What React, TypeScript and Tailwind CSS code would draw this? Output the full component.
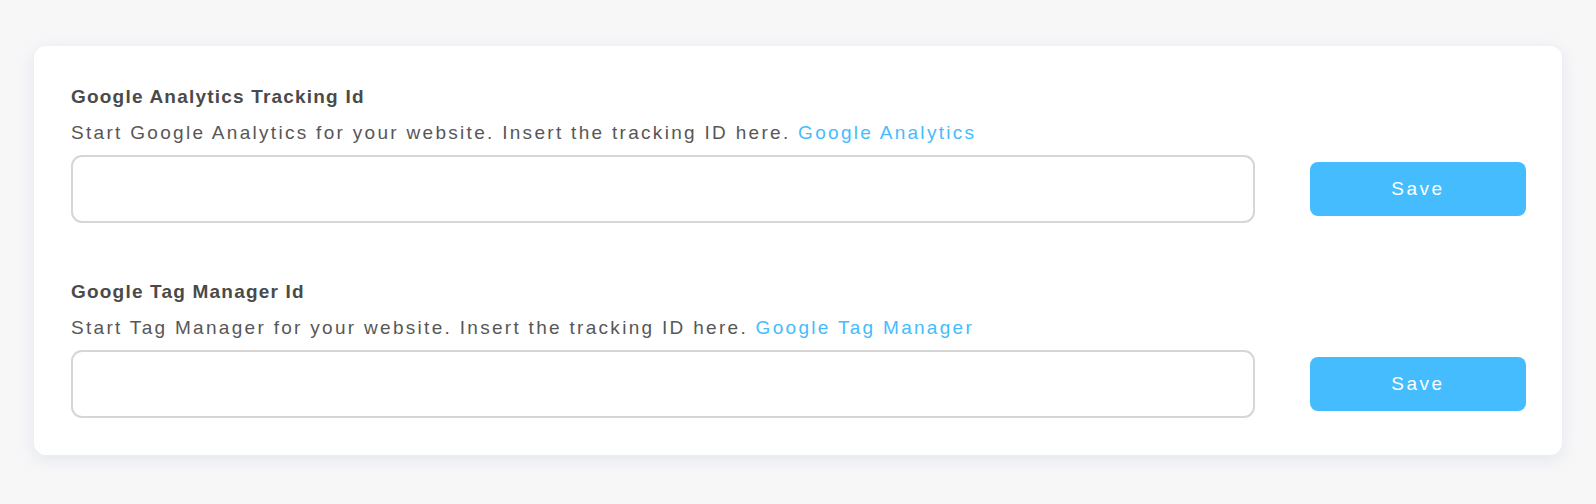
import React from "react";

type Field = {
  title: string;
  text: string;
  link: string;
};

const fields: Field[] = [
  {
    title: "Google Analytics Tracking Id",
    text: "Start Google Analytics for your website. Insert the tracking ID here.",
    link: "Google Analytics",
  },
  {
    title: "Google Tag Manager Id",
    text: "Start Tag Manager for your website. Insert the tracking ID here.",
    link: "Google Tag Manager",
  },
];

function TrackingField({ field, first }: { field: Field; first: boolean }) {
  return (
    <div className={first ? "" : "mt-[57px]"}>
      <h3 className="text-[19px] leading-[24px] font-bold text-[#4a4a4a] tracking-[1.2px]">
        {field.title}
      </h3>
      <p className="mt-3 text-[19px] leading-[24px] text-[#575757] tracking-[2.3px]">
        {field.text}{" "}
        <a href="#" className="text-[#45bcfd]">
          {field.link}
        </a>
      </p>
      <div className="mt-[10px] flex items-center gap-[55px]">
        <input
          type="text"
          className="h-[68px] flex-1 rounded-[11px] border-2 border-[#d6d6d6] bg-white px-4 text-[18px] text-[#4a4a4a] outline-none"
        />
        <button className="h-[54px] w-[216px] rounded-[8px] bg-[#45bcfd] text-[19px] tracking-[2.5px] text-white">
          Save
        </button>
      </div>
    </div>
  );
}

export default function App() {
  return (
    <div
      className="min-h-[504px] bg-[#f7f7f8] px-[34px] pt-[46px]"
      style={{ fontFamily: '"Liberation Sans", Arial, sans-serif' }}
    >
      <div className="rounded-[12px] bg-white pt-[39px] pb-[37px] pl-[37px] pr-[36px] shadow-[0_4px_16px_rgba(190,198,220,0.35)]">
        {fields.map((f, i) => (
          <TrackingField key={f.title} field={f} first={i === 0} />
        ))}
      </div>
    </div>
  );
}
